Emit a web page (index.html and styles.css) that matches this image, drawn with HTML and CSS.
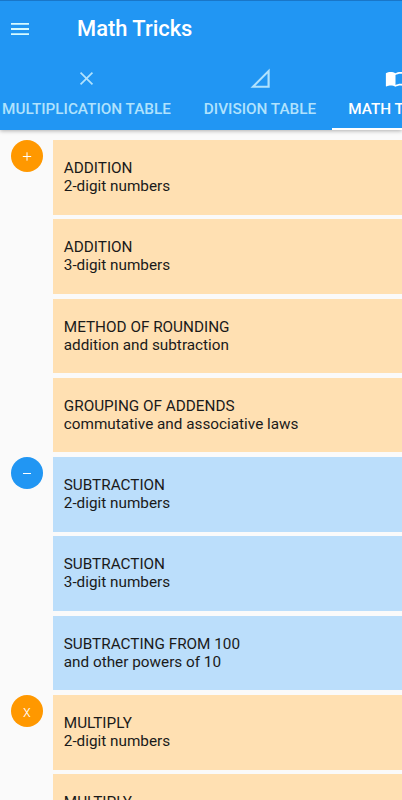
FILE: index.html
```
<!DOCTYPE html>
<html lang="en">
<head>
<meta charset="utf-8">
<title>Math Tricks</title>
<link rel="stylesheet" href="styles.css">
</head>
<body>
<header class="appbar">
  <div class="toolbar">
    <svg class="menu" viewBox="0 0 18 12"><path d="M0 .9h18M0 6h18M0 11.1h18" stroke="currentColor" stroke-width="1.8"/></svg>
    <h1 class="title">Math Tricks</h1>
  </div>
  <nav class="tabs">
    <div class="tab tab-multiplication">
      <svg class="icon" viewBox="0 0 24 24"><path d="M19.5 5.9 18.1 4.5 12 10.6 5.9 4.5 4.5 5.9 10.6 12 4.5 18.1 5.9 19.5 12 13.4 18.1 19.5 19.5 18.1 13.4 12z" fill="currentColor"/></svg>
      <span class="label">MULTIPLICATION TABLE</span>
    </div>
    <div class="tab tab-division">
      <svg class="icon" viewBox="0 0 24 24"><path d="M.5 22.5h22V.5L.5 22.5zm19.5-2.3H6.2L20 6.4z" fill="currentColor"/></svg>
      <span class="label">DIVISION TABLE</span>
    </div>
    <div class="tab tab-tricks active">
      <svg class="icon" viewBox="0 0 24 24"><path d="M21 5c-1.11-.35-2.33-.5-3.5-.5-1.95 0-4.05.4-5.5 1.5-1.45-1.1-3.55-1.5-5.5-1.5S2.45 4.9 1 6v14.65c0 .25.25.5.5.5.1 0 .15-.05.25-.05C3.1 20.45 5.05 20 6.5 20c1.95 0 4.05.4 5.5 1.5 1.35-.85 3.8-1.5 5.5-1.5 1.65 0 3.35.3 4.75 1.05.1.05.15.05.25.05.25 0 .5-.25.5-.5V6c-.6-.45-1.25-.75-2-1zm0 13.5c-1.1-.35-2.3-.5-3.5-.5-1.7 0-4.15.65-5.5 1.5V8c1.35-.85 3.8-1.5 5.5-1.5 1.2 0 2.4.15 3.5.5v11.5z" fill="currentColor"/></svg>
      <span class="label">MATH TRICKS</span>
    </div>
  </nav>
</header>
<main class="list">
  <section class="group addition">
    <div class="badge"><svg viewBox="0 0 10 10"><path d="M.8 5.5h8.4M5 1.3v8.4" stroke="currentColor"/></svg></div>
    <div class="cards">
      <article class="card"><p>ADDITION</p><p>2-digit numbers</p></article>
      <article class="card"><p>ADDITION</p><p>3-digit numbers</p></article>
      <article class="card"><p>METHOD OF ROUNDING</p><p>addition and subtraction</p></article>
      <article class="card"><p>GROUPING OF ADDENDS</p><p>commutative and associative laws</p></article>
    </div>
  </section>
  <section class="group subtraction">
    <div class="badge"><svg viewBox="0 0 10 10"><path d="M1 5.5h8" stroke="currentColor"/></svg></div>
    <div class="cards">
      <article class="card"><p>SUBTRACTION</p><p>2-digit numbers</p></article>
      <article class="card"><p>SUBTRACTION</p><p>3-digit numbers</p></article>
      <article class="card"><p>SUBTRACTING FROM 100</p><p>and other powers of 10</p></article>
    </div>
  </section>
  <section class="group multiply">
    <div class="badge"><span>x</span></div>
    <div class="cards">
      <article class="card"><p>MULTIPLY</p><p>2-digit numbers</p></article>
      <article class="card"><p>MULTIPLY</p></article>
    </div>
  </section>
</main>
</body>
</html>
```
FILE: styles.css
```
* { box-sizing: border-box; }
body {
  margin: 0;
  height: 800px;
  overflow: hidden;
  background: #fafafa;
  font-family: Roboto, sans-serif;
  display: flex;
  flex-direction: column;
}
h1, p { margin: 0; }
svg { display: block; }
.appbar {
  position: relative;
  flex: none;
  height: 130px;
  background: #2196f3;
  border-top: 1px solid #1976c8;
  box-shadow: 0 1px 4px rgba(0, 0, 0, .3);
}
.toolbar {
  display: flex;
  align-items: center;
  height: 56px;
  padding-left: 11px;
  color: #fff;
}
.menu { width: 18px; height: 12px; color: #d5faff; }
.title {
  margin-left: 48px;
  font-size: 21.9px;
  font-weight: 500;
  line-height: 28px;
  white-space: nowrap;
}
.tabs {
  display: flex;
  height: 73px;
  margin-left: -15px;
  width: 417px;
  overflow: hidden;
}
.tab {
  flex: none;
  display: flex;
  flex-direction: column;
  align-items: center;
  padding-top: 11px;
  color: #b0e2fd;
}
.tab-multiplication { width: 203px; }
.tab-division { width: 144px; }
.tab-tricks { width: 131px; }
.tab.active { color: #fff; border-bottom: 2px solid #fff; }
.icon { width: 21px; height: 21px; }
.tab-tricks .icon { margin-left: -5px; }
.label {
  margin-top: 11px;
  font-size: 15.3px;
  font-weight: 500;
  line-height: 18px;
  white-space: nowrap;
}
.list { padding-top: 10px; flex: 1; min-height: 0; overflow: hidden; }
.group { display: flex; padding-left: 11px; }
.badge {
  flex: none;
  width: 32px;
  height: 32px;
  margin-right: 10.4px;
  border-radius: 50%;
  background: #ff9800;
  color: #fff;
  font-size: 16px;
  font-weight: 300;
  display: flex;
  align-items: center;
  justify-content: center;
}
.badge svg { width: 10px; height: 10px; }
.badge span { padding-top: 2px; }
.subtraction .badge { background: #2196f3; }
.cards { flex: 1; }
.card {
  height: 74.6px;
  margin-bottom: 4.7px;
  padding: 19.05px 10.4px 0;
  background: #ffe0b2;
  color: #1a1a1a;
  font-size: 15.3px;
  font-weight: 400;
  line-height: 18px;
}
.subtraction .card { background: #bbdefb; }
```
